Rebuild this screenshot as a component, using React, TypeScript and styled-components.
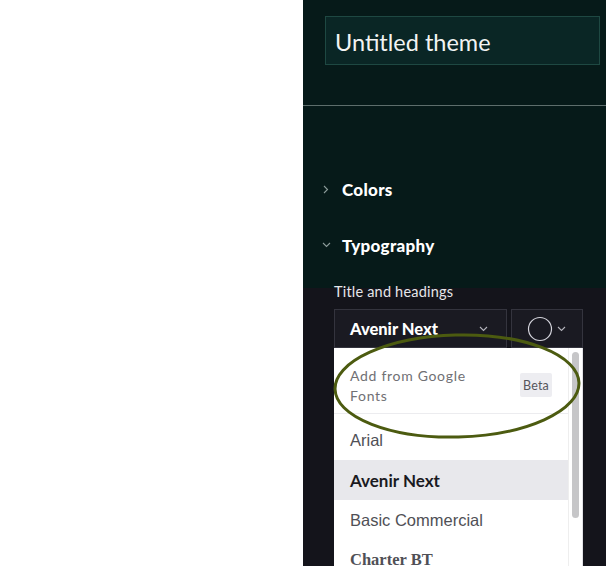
import React from "react";
import styled, { createGlobalStyle } from "styled-components";

const Global = createGlobalStyle`
  html, body { margin: 0; padding: 0; background: #ffffff; }
  body { font-family: "Lato", "Noto Sans", sans-serif; }
  * { box-sizing: border-box; }
`;

const Page = styled.div`
  display: grid;
  grid-template-columns: 303px 303px;
  width: 606px;
  height: 566px;
  overflow: hidden;
`;

const Blank = styled.div`
  background: #ffffff;
`;

const Panel = styled.div`
  position: relative;
  display: flex;
  flex-direction: column;
  background: #14141b;
  overflow: hidden;
`;

const Header = styled.div`
  flex-shrink: 0;
  height: 288px;
  background: #061a19;
  padding-top: 16px;
  display: flex;
  flex-direction: column;
`;

const TitleInput = styled.div`
  margin-left: 22px;
  width: 275px;
  height: 49px;
  background: #0a2625;
  border: 1px solid #1e4842;
  color: #f2f4f3;
  font-size: 23.5px;
  display: flex;
  align-items: center;
  padding-left: 9px;
  padding-top: 2px;
`;

const Divider = styled.div`
  margin-top: 40px;
  height: 1px;
  background: #5d6e6c;
`;

const Sections = styled.div`
  padding-top: 55px;
  display: flex;
  flex-direction: column;
`;

const SectionRow = styled.div`
  height: 56px;
  display: flex;
  align-items: center;
  padding-left: 18px;
  gap: 11px;
  color: #ffffff;
  font-size: 17px;
  font-weight: 900;
  letter-spacing: 0.3px;
`;

const ChevronBox = styled.span`
  width: 10px;
  display: flex;
  justify-content: center;
  color: #8c9c9a;
`;

const Body = styled.div`
  flex-shrink: 0;
  padding-left: 31px;
  display: flex;
  flex-direction: column;
`;

const Label = styled.div`
  margin-top: -6px;
  height: 20px;
  line-height: 20px;
  font-size: 14.5px;
  color: #e6e6ea;
  letter-spacing: 0.2px;
`;

const Controls = styled.div`
  margin-top: 7px;
  display: flex;
  gap: 4px;
`;

const Select = styled.div`
  width: 173px;
  height: 39px;
  background: #1a1a22;
  border: 1px solid #34343e;
  display: flex;
  align-items: center;
  justify-content: space-between;
  padding: 0 18px 0 15px;
  color: #ffffff;
  font-weight: 900;
  font-size: 16.5px;
`;

const ColorButton = styled.div`
  width: 72px;
  height: 39px;
  background: #1a1a22;
  border: 1px solid #34343e;
  display: flex;
  align-items: center;
  justify-content: center;
  gap: 4px;
  padding-right: 2px;
`;

const Dropdown = styled.div`
  flex-shrink: 0;
  width: 249px;
  height: 230px;
  background: #ffffff;
  display: flex;
  border-right: 1px solid #e2e2e6;
`;

const List = styled.div`
  flex: 1;
  display: flex;
  flex-direction: column;
`;

const GoogleRow = styled.div`
  display: flex;
  align-items: center;
  justify-content: space-between;
  padding: 18px 16px 7px 16px;
  border-bottom: 1px solid #ececef;
`;

const GoogleText = styled.div`
  max-width: 135px;
  font-size: 14px;
  line-height: 20px;
  letter-spacing: 0.7px;
  color: #707074;
`;

const Badge = styled.span`
  width: 32px;
  height: 24px;
  margin-top: -2px;
  background: #ededf1;
  border-radius: 2px;
  color: #56565c;
  font-size: 12.5px;
  display: flex;
  align-items: center;
  justify-content: center;
  letter-spacing: 0.2px;
`;

const Options = styled.div`
  padding-top: 6px;
  display: flex;
  flex-direction: column;
`;

const Option = styled.div<{ $font: string; $weight?: number; $active?: boolean; $size?: number; $color?: string }>`
  height: 40px;
  display: flex;
  align-items: center;
  padding-left: 16px;
  font-family: ${(p) => p.$font};
  font-weight: ${(p) => p.$weight ?? 400};
  font-size: ${(p) => p.$size ?? 16}px;
  color: ${(p) => p.$color ?? "#505056"};
  background: ${(p) => (p.$active ? "#e8e8ec" : "transparent")};
`;

const Track = styled.div`
  width: 14px;
  border-left: 1px solid #eeeeee;
  padding: 4px 3px 0 3px;
`;

const Thumb = styled.div`
  width: 7px;
  height: 166px;
  border-radius: 4px;
  background: #c6c6c8;
`;

const Annotation = styled.svg`
  position: absolute;
  left: 27px;
  top: 330px;
  width: 254px;
  height: 114px;
  pointer-events: none;
`;

const ChevronRight = () => (
  <svg width="6" height="9" viewBox="0 0 6 9">
    <path d="M1 1 L4.5 4.5 L1 8" fill="none" stroke="currentColor" strokeWidth="1.1" />
  </svg>
);

const ChevronDown = ({ color = "currentColor" }: { color?: string }) => (
  <svg width="9" height="6" viewBox="0 0 9 6">
    <path d="M1 1 L4.5 4.5 L8 1" fill="none" stroke={color} strokeWidth="1.1" />
  </svg>
);

export default function App() {
  return (
    <>
      <Global />
      <Page>
        <Blank />
        <Panel>
          <Header>
            <TitleInput>Untitled theme</TitleInput>
            <Divider />
            <Sections>
              <SectionRow>
                <ChevronBox>
                  <ChevronRight />
                </ChevronBox>
                Colors
              </SectionRow>
              <SectionRow>
                <ChevronBox>
                  <ChevronDown />
                </ChevronBox>
                Typography
              </SectionRow>
            </Sections>
          </Header>
          <Body>
            <Label>Title and headings</Label>
            <Controls>
              <Select>
                Avenir Next
                <ChevronDown color="#b4b4bc" />
              </Select>
              <ColorButton>
                <svg width="26" height="26" viewBox="0 0 26 26">
                  <circle cx="13" cy="13" r="11.5" fill="none" stroke="#d4d4dc" strokeWidth="1.2" />
                </svg>
                <ChevronDown color="#b4b4bc" />
              </ColorButton>
            </Controls>
            <Dropdown>
              <List>
                <GoogleRow>
                  <GoogleText>Add from Google Fonts</GoogleText>
                  <Badge>Beta</Badge>
                </GoogleRow>
                <Options>
                  <Option $font='"Liberation Sans", Arial, sans-serif' $size={16.5}>Arial</Option>
                  <Option $font='"Lato", "Noto Sans", sans-serif' $weight={700} $size={17} $active $color="#1a1a1f">
                    Avenir Next
                  </Option>
                  <Option $font='"Liberation Sans", Arial, sans-serif' $size={16.5}>Basic Commercial</Option>
                  <Option $font='"Liberation Serif", serif' $weight={700} $size={16.5}>Charter BT</Option>
                </Options>
              </List>
              <Track>
                <Thumb />
              </Track>
            </Dropdown>
          </Body>
          <Annotation viewBox="0 0 254 114">
            <ellipse
              cx="127"
              cy="56"
              rx="122"
              ry="51"
              fill="none"
              stroke="#4c5b10"
              strokeWidth="3"
              transform="rotate(-1.5 127 56)"
            />
          </Annotation>
        </Panel>
      </Page>
    </>
  );
}
